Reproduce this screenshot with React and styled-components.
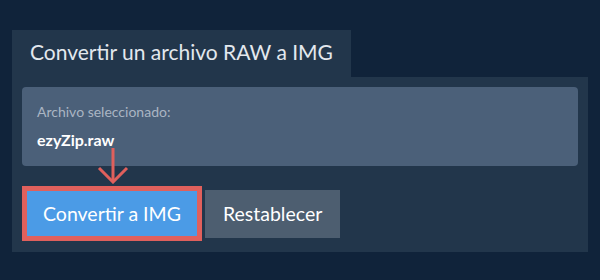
import React from 'react';
import styled, { createGlobalStyle } from 'styled-components';

const GlobalStyle = createGlobalStyle`
  html, body {
    margin: 0;
    padding: 0;
    background: #10233a;
  }
  body {
    font-family: Lato, "Open Sans", "Liberation Sans", sans-serif;
  }
`;

const Page = styled.div`
  width: 600px;
  height: 280px;
  box-sizing: border-box;
  padding: 30px 12px 0 12px;
`;

const Tab = styled.div`
  display: inline-block;
  background: #22364b;
  color: #e3e8ee;
  font-size: 21px;
  height: 47px;
  line-height: 44px;
  padding: 0 18px;
`;

const Panel = styled.div`
  position: relative;
  background: #22364b;
  padding: 10px;
  height: 175px;
  box-sizing: border-box;
`;

const FileBox = styled.div`
  background: #4b6079;
  border-radius: 4px;
  height: 79px;
  box-sizing: border-box;
  padding: 16px 15px 0 15px;
`;

const Label = styled.div`
  color: #aab5c3;
  font-size: 14px;
  line-height: 18px;
`;

const FileName = styled.div`
  color: #ffffff;
  font-weight: 700;
  font-size: 16px;
  line-height: 20px;
  margin-top: 9px;
`;

const Actions = styled.div`
  display: flex;
  align-items: center;
  gap: 3px;
  margin-top: 20px;
`;

const Button = styled.button`
  font-family: inherit;
  font-size: 19.5px;
  color: #ffffff;
  border: ${p => (p.$highlight ? '5px solid #e0605c' : 'none')};
  background: ${p => (p.$primary ? '#4b9be6' : '#4d5e70')};
  height: ${p => (p.$highlight ? '55px' : '48px')};
  padding: ${p => (p.$highlight ? '0 16px' : '0 18px')};
  box-sizing: border-box;
  cursor: pointer;
`;

const Arrow = styled.svg`
  position: absolute;
  left: 85px;
  top: 71px;
`;

export default function App() {
  return (
    <>
      <GlobalStyle />
      <Page>
        <Tab>Convertir un archivo RAW a IMG</Tab>
        <Panel>
          <FileBox>
            <Label>Archivo seleccionado:</Label>
            <FileName>ezyZip.raw</FileName>
          </FileBox>
          <Arrow width="32" height="36" viewBox="0 0 32 36">
            <g stroke="#e0605c" strokeWidth="3" fill="none" strokeLinecap="butt" strokeLinejoin="miter">
              <line x1="16" y1="0" x2="16" y2="33" />
              <polyline points="2,20 16,34 30,20" />
            </g>
          </Arrow>
          <Actions>
            <Button $primary $highlight>Convertir a IMG</Button>
            <Button>Restablecer</Button>
          </Actions>
        </Panel>
      </Page>
    </>
  );
}
